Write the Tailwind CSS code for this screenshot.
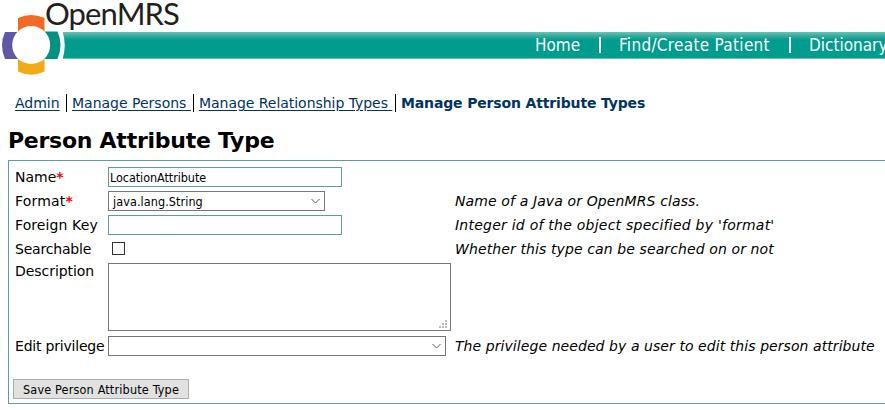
<!DOCTYPE html>
<html lang="en">
<head>
<meta charset="utf-8">
<title>Person Attribute Type</title>
<script src="https://cdn.jsdelivr.net/npm/@tailwindcss/browser@4"></script>
</head>
<body class="bg-white text-black w-[885px] h-[410px] overflow-hidden font-['DejaVu_Sans',sans-serif] text-[14px] leading-[18px] whitespace-nowrap">
<header class="relative h-[92px] pt-[32px]">
  <nav class="ml-[62px] h-[27px] bg-linear-to-b from-[#69c2b6] via-[#2fac9f] via-15% to-[#009c8d] to-30% border-b border-[#6bbfb5] pl-[473px] flex items-center text-white text-[17px] leading-[20px] font-['DejaVu_Sans_Condensed','DejaVu_Sans',sans-serif]">
    <a class="w-[64px] shrink-0">Home</a><i class="w-[2px] shrink-0 h-[16px] bg-white mr-[18px]"></i><a class="w-[170px] shrink-0 tracking-[0.3px]">Find/Create Patient</a><i class="w-[2px] shrink-0 h-[16px] bg-white mr-[18px]"></i><a>Dictionary</a>
  </nav>
  <svg class="absolute left-0 top-0" width="66" height="80" viewBox="0 0 66 80">
    <path d="M61 31.500H62.500Q67 45 62.500 59.500H57Z" fill="white"/>
    <path d="M18 18Q31 12 44.500 18V32H18Z" fill="#f46a25"/>
    <path d="M18 58H44.500V71.500Q31 78 18 71.500Z" fill="#f2aa17"/>
    <path d="M5 32H18V59H5Q-1 45 5 32Z" fill="#5e58a7"/>
    <path d="M44 31.500H57.500Q63.500 45 57.500 59H44Z" fill="#009384"/>
    <circle cx="31.200" cy="45" r="19" fill="white"/>
  </svg>
  <div class="absolute left-[45px] top-0 text-[31px] leading-[27px] tracking-[-0.9px] text-[#231f20] font-['Lato',sans-serif]">OpenMRS</div>
</header>
<nav class="h-[36px] pl-[15px] pt-[2px] flex items-start text-[#003366] leading-[18px]">
  <a class="w-[51px]"><span class="underline underline-offset-2">Admin</span></a>
  <a class="w-[127px] border-l border-black pl-[5px]"><span class="underline underline-offset-2 whitespace-pre">Manage Persons </span></a>
  <a class="w-[202px] border-l border-black pl-[5px]"><span class="underline underline-offset-2 whitespace-pre tracking-[-0.04px]">Manage Relationship Types </span></a>
  <b class="border-l border-black pl-[5px] tracking-[-0.15px]">Manage Person Attribute Types</b>
</nav>
<h2 class="pl-[8px] h-[32px] text-[22px] leading-[26px] font-bold tracking-[-0.26px]">Person Attribute Type</h2>
<form class="ml-[8px] w-[890px] h-[244px] border border-[#5f9ea0] pt-[4px] pl-[6px]">
  <div class="grid grid-cols-[93px_347px_1fr] grid-rows-[24px_24px_24px_24px_73px_24px] items-center">
    <label>Name<span class="text-[#ff0000] font-bold">*</span></label>
    <div class="w-[234px] h-[20px] border border-[#5f9ea0] pl-[1px] text-[12.5px] leading-[19px] tracking-[-0.06px] font-['DejaVu_Sans_Condensed','DejaVu_Sans',sans-serif]">LocationAttribute</div><span></span>
    <label class="tracking-[0.2px]">Format<span class="text-[#ff0000] font-bold">*</span></label>
    <div class="w-[217px] h-[20px] border border-[#767676] pl-[4px] pr-[4px] flex items-center justify-between text-[12.5px] tracking-[0.08px] font-['DejaVu_Sans_Condensed','DejaVu_Sans',sans-serif]"><span class="pt-px">java.lang.String</span><svg width="9" height="6" viewBox="0 0 9 6"><path d="M.5 1L4.500 5L8.500 1" fill="none" stroke="#555"/></svg></div>
    <i class="tracking-[0.12px]">Name of a Java or OpenMRS class.</i>
    <label class="tracking-[0.1px]">Foreign Key</label>
    <div class="w-[234px] h-[20px] border border-[#5f9ea0]"></div>
    <i class="tracking-[0.24px]">Integer id of the object specified by 'format'</i>
    <label class="tracking-[-0.2px]">Searchable</label>
    <div class="w-[13px] h-[13px] border border-[#333] ml-[4px] -mt-px"></div>
    <i class="tracking-[0.11px]">Whether this type can be searched on or not</i>
    <label class="self-start pt-[1px] tracking-[-0.05px]">Description</label>
    <div class="self-start mt-[2px] w-[343px] h-[68px] border border-[#767676] flex items-end justify-end pr-[3px] pb-[2px]"><svg width="8" height="8" fill="#bbb"><path d="M6 0h2v2H6zM3 3h2v2H3zM6 3h2v2H6zM0 6h2v2H0zM3 6h2v2H3zM6 6h2v2H6z"/></svg></div><span></span>
    <label class="tracking-[-0.2px]">Edit privilege</label>
    <div class="w-[338px] h-[20px] border border-[#767676] pr-[4px] flex items-center justify-end"><svg width="9" height="6" viewBox="0 0 9 6"><path d="M.5 1L4.500 5L8.500 1" fill="none" stroke="#555"/></svg></div>
    <i class="tracking-[0.07px]">The privilege needed by a user to edit this person attribute</i>
  </div>
  <div class="mt-[21px] -ml-[2px] w-[176px] h-[20px] border border-[#adadad] bg-[#e1e1e1] text-center text-[12.5px] leading-[20px] tracking-[0.18px] font-['DejaVu_Sans_Condensed','DejaVu_Sans',sans-serif]">Save Person Attribute Type</div>
</form>
</body>
</html>
